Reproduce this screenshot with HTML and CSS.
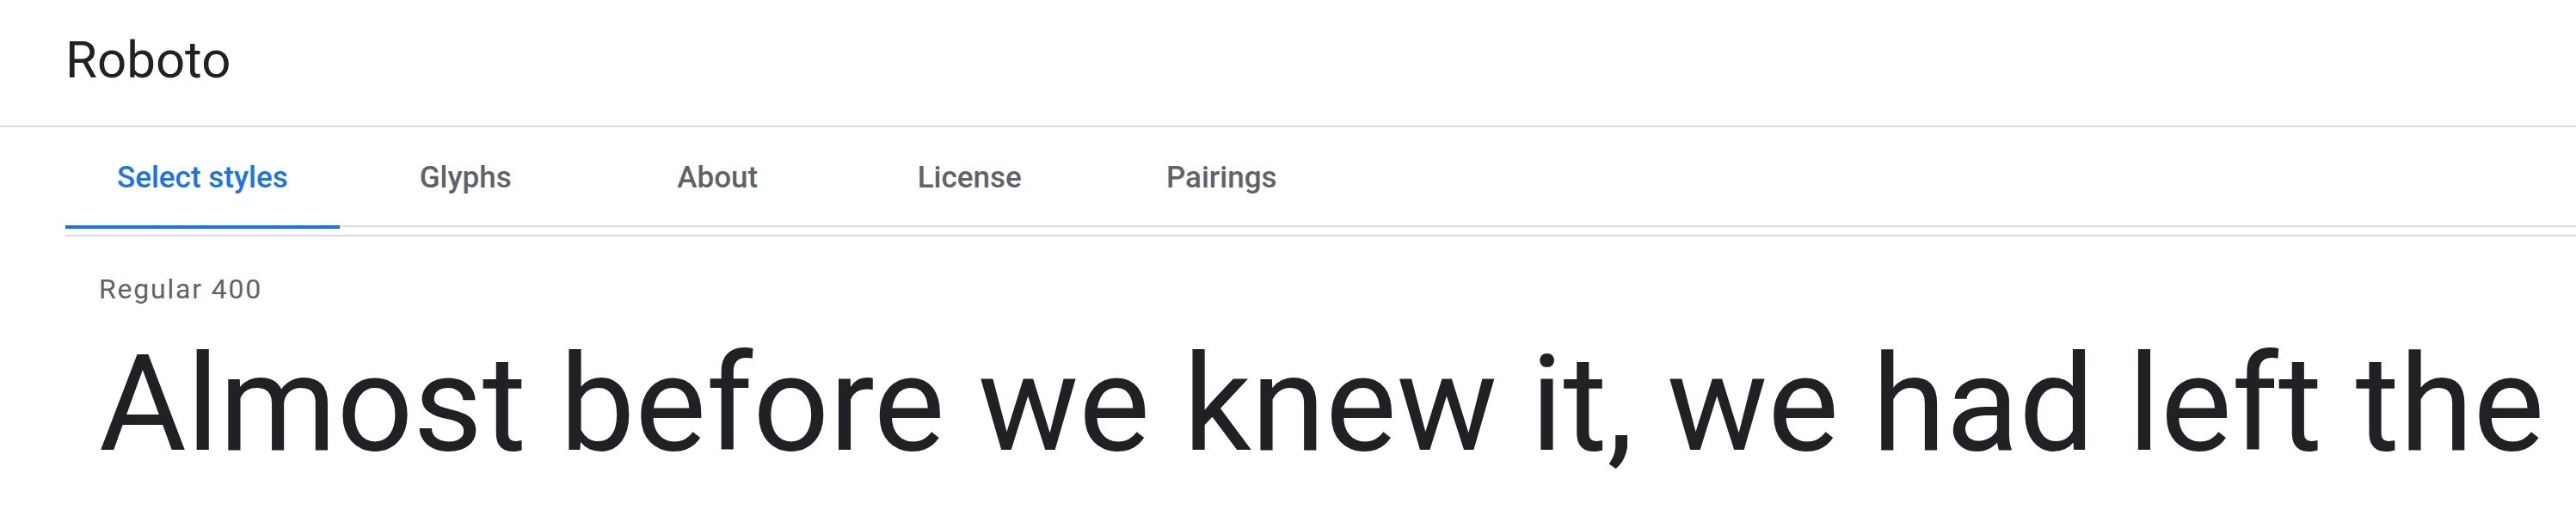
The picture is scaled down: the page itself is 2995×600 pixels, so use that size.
FILE: index.html
```html
<!DOCTYPE html>
<html lang="en">
<head>
<meta charset="utf-8">
<title>Roboto - Google Fonts</title>
<link rel="stylesheet" href="styles.css">
</head>
<body>
<header class="topbar">
  <h1 class="family">Roboto</h1>
</header>
<main class="main">
  <nav class="tabs">
    <a class="tab tab-active">Select styles</a>
    <a class="tab">Glyphs</a>
    <a class="tab">About</a>
    <a class="tab">License</a>
    <a class="tab">Pairings</a>
  </nav>
  <section class="styles">
    <div class="style-row">
      <div class="style-name">Regular 400</div>
      <div class="sample">Almost before we knew it, we had left the ground.</div>
    </div>
  </section>
</main>
</body>
</html>
```
FILE: styles.css
```css
html, body {
  margin: 0;
  padding: 0;
  background: #ffffff;
}

body {
  font-family: Roboto, "Liberation Sans", sans-serif;
  color: #202124;
  overflow: hidden;
}

.topbar {
  box-sizing: border-box;
  height: 148px;
  padding: 35px 0 0 76px;
  border-bottom: 2px solid #dadce0;
}

.family {
  margin: 0;
  font-size: 60px;
  font-weight: 400;
  line-height: 69px;
  color: #202124;
}

.main {
  margin-left: 76px;
}

.tabs {
  display: flex;
  border-bottom: 2px solid #dadce0;
}

.tab {
  position: relative;
  box-sizing: border-box;
  min-width: 293px;
  padding: 38px 60px 35px;
  text-align: center;
  font-size: 35px;
  font-weight: 500;
  line-height: 41px;
  color: #5f6368;
  text-decoration: none;
  white-space: nowrap;
}

.tab-active {
  color: #1a73e8;
}

.tab-active::after {
  content: "";
  position: absolute;
  left: 0;
  right: 0;
  bottom: -4px;
  height: 4px;
  background: #1a73e8;
}

.styles {
  margin-top: 9px;
  border-top: 2px solid #dadce0;
}

.style-row {
  padding: 47px 0 0 39px;
}

.style-name {
  font-size: 32px;
  line-height: 28px;
  letter-spacing: 1.8px;
  color: #5f6368;
}

.sample {
  font-size: 156px;
  line-height: 240px;
  font-weight: 400;
  color: #202124;
}
```
